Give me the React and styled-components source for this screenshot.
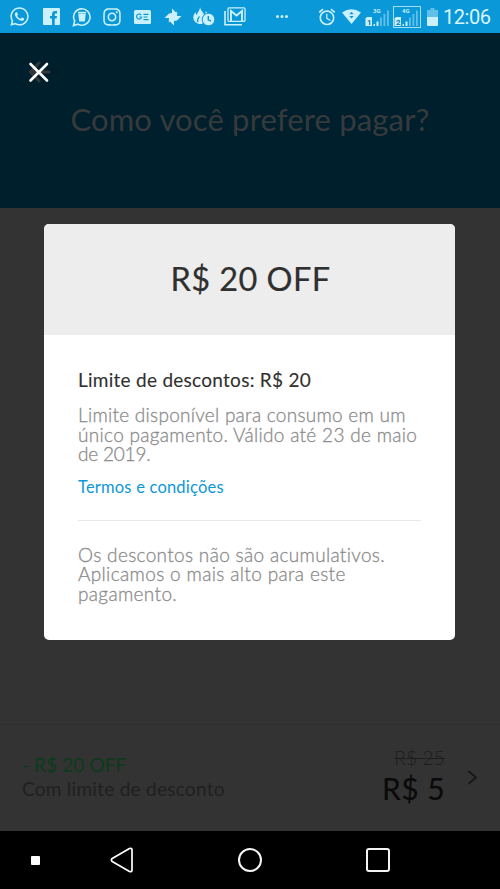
import React from "react";
import styled, { createGlobalStyle } from "styled-components";
import { FaWhatsapp, FaInstagram } from "react-icons/fa";
import { MdAlarm } from "react-icons/md";

const GlobalStyle = createGlobalStyle`
  * { box-sizing: border-box; }
  body { margin: 0; background: #000; font-family: Lato, "Open Sans", sans-serif; }
  h1, h2, h3, p { margin: 0; font-weight: 400; }
`;

const Screen = styled.div`
  position: relative;
  display: grid;
  grid-template-rows: 33px 175px 1fr 107px 58px;
  width: 500px;
  height: 889px;
  overflow: hidden;
  background: #333;
`;

const StatusBar = styled.div`
  display: flex;
  align-items: center;
  background: #0b98d9;
  color: #caf0fb;
  svg { display: block; flex: none; }
`;

const StatusItem = styled.span`
  flex: none;
  margin-left: ${(p) => p.$gap}px;
`;

const Clock = styled.time`
  margin-left: 5px;
  font: 400 20px/33px Roboto, sans-serif;
  letter-spacing: -0.45px;
  color: #d9f5fd;
  padding-top: 2px;
`;

const Header = styled.header`
  position: relative;
  display: flex;
  flex-direction: column;
  align-items: center;
  padding-top: 66px;
  background: #001f2c;
`;

const PageTitle = styled.h1`
  font-size: 31px;
  line-height: 40px;
  letter-spacing: 0.15px;
  white-space: nowrap;
  color: #363a3c;
`;

const CloseButton = styled.button`
  position: absolute;
  left: 27px;
  top: 27px;
  width: 24px;
  height: 24px;
  padding: 0;
  border: 0;
  background: none;
  svg { display: block; }
`;

const Stage = styled.main`
  display: flex;
  justify-content: center;
  align-items: flex-start;
  padding: 16px 1px 0 0;
`;

const Dialog = styled.section`
  width: 411px;
  height: 416px;
  border-radius: 5px;
  overflow: hidden;
  background: #fff;
`;

const DialogHead = styled.div`
  display: flex;
  align-items: center;
  justify-content: center;
  height: 111px;
  padding: 0 0 2px 2px;
  background: #ededed;
`;

const DialogTitle = styled.h2`
  font-size: 32.5px;
  line-height: 40px;
  letter-spacing: 0.4px;
  color: #303030;
  -webkit-text-stroke: 0.2px #303030;
`;

const DialogBody = styled.div`
  display: flex;
  flex-direction: column;
  padding: 33px 34px 0;
`;

const Limit = styled.h3`
  font-size: 19px;
  line-height: 24px;
  letter-spacing: 0.27px;
  white-space: nowrap;
  color: #303030;
  -webkit-text-stroke: 0.1px #303030;
`;

const Copy = styled.p`
  margin-top: ${(p) => p.$top}px;
  font-size: 19px;
  font-weight: 300;
  line-height: 19.5px;
  color: #8c8c8c;
  -webkit-text-stroke: 0.3px #8c8c8c;
`;

const Line = styled.span`
  display: block;
  white-space: nowrap;
  letter-spacing: ${(p) => p.$track}px;
`;

const TermsLink = styled.a`
  margin-top: 13px;
  font-size: 16.5px;
  line-height: 20px;
  letter-spacing: 0.2px;
  color: #0b98d9;
`;

const Divider = styled.hr`
  width: 100%;
  height: 1px;
  margin: 23px 0 0;
  border: 0;
  background: #e9e9e9;
`;

const Footer = styled.footer`
  display: flex;
  justify-content: space-between;
  border-top: 1px solid #2f2f2f;
  padding: 0 22px;
  line-height: 24px;
  font-size: 19px;
`;

const Summary = styled.div`
  padding-top: 28px;
`;

const Discount = styled.p`
  letter-spacing: 0.1px;
  color: #0c3a1c;
`;

const Note = styled.p`
  letter-spacing: 0.27px;
  color: #202020;
`;

const PriceGroup = styled.div`
  display: flex;
  align-items: flex-start;
`;

const Prices = styled.div`
  padding-top: 21px;
  text-align: right;
`;

const OldPrice = styled.p`
  letter-spacing: 0.2px;
  color: #1d1d1d;
  font-weight: 300;
  text-decoration: line-through;
`;

const Price = styled.p`
  font-size: 30px;
  line-height: 36px;
  letter-spacing: 0.4px;
  color: #0a0a0a;
  -webkit-text-stroke: 0.15px #0a0a0a;
`;

const Chevron = styled.svg`
  margin: 44px 0 0 22px;
`;

const NavBar = styled.nav`
  display: flex;
  align-items: center;
  background: #000;
  svg { display: block; }
`;

const Pin = styled.span`
  width: 9px;
  height: 9px;
  margin: 0 70px 0 31px;
  border-radius: 1px;
  background: #fff;
`;

const NavKey = styled.span`
  width: 24px;
  height: 24px;
  margin-left: 104px;
  border: 2px solid #f4f4f4;
  border-radius: ${(p) => p.$radius};
`;

const SimLabel = styled.text`
  font: 700 ${(p) => p.$size}px Roboto, sans-serif;
  fill: ${(p) => p.$color || "#caf0fb"};
`;

const TrashBubble = () => (
  <svg width="20" height="20" viewBox="0 0 20 20" fill="none">
    <path d="M1.500 18.500 2.700 14a8.200 8.200 0 1 1 3.300 3.200z" stroke="currentColor" strokeWidth="1.600" />
    <path d="M6.200 6.500h7.600l-1 8H7.200z" fill="currentColor" />
    <path d="M6 5.500h8" stroke="currentColor" strokeWidth="1.400" />
  </svg>
);

const Facebook = () => (
  <svg width="17" height="17" viewBox="0 0 17 17">
    <rect width="17" height="17" rx="1" fill="currentColor" />
    <path d="M9 17V10.500H7V8h2V6.200C9 4 10.400 3 12.200 3H14v2.400h-1.200c-.8 0-1.100.4-1.100 1.100V8H14l-.4 2.500h-1.900V17z" fill="#0b98d9" />
  </svg>
);

const News = () => (
  <svg width="17" height="14" viewBox="0 0 17 14">
    <rect width="17" height="14" rx="1.500" fill="currentColor" />
    <path d="M7.200 5.100A2.500 2.500 0 1 0 7.600 7H5.300M9.500 4.300h5M9.500 7h4M9.500 9.700h5" fill="none" stroke="#0b98d9" strokeWidth="1.200" />
  </svg>
);

const Pinwheel = () => (
  <svg width="18" height="18" viewBox="0 0 18 18" fill="currentColor">
    <path d="M8 .5 12.500 5v4H9V7L8 9H3.500Q4 5.500 8 5z" />
    <path d="M17.500 8 13 12.500H9V9l4-5.500Q13.500 4 13 8z" />
    <path d="M10 17.500 5.500 13V9H9l5.500 0Q14 12.500 10 13z" />
    <path d="M.5 10 5 5.500h4V9l-4 5.500Q4.500 14 5 10z" />
  </svg>
);

const FlameClock = () => (
  <svg width="22" height="19" viewBox="0 0 22 19">
    <path d="M7 0c.5 4 4 5 4 8.300C13 7 12.500 5 12.500 4c2 1.500 3 3 3 4.500L9 17H6C2.500 16 .3 13.500.3 10.500.3 8 1.500 6.500 2.800 5c0 1.500.2 2.500 1.200 3.200C4 5 7 4 7 0z" fill="currentColor" />
    <path d="M5 15c-1.500-2 .5-4 1.500-5.500" stroke="#0b98d9" fill="none" strokeWidth="1.300" />
    <circle cx="15.500" cy="12.500" r="6.300" fill="currentColor" stroke="#0b98d9" strokeWidth="1" />
    <path d="M15.300 9v3.800l2.700 1.200" fill="none" stroke="#0b98d9" strokeWidth="1.400" />
  </svg>
);

const MailStack = () => (
  <svg width="22" height="19" viewBox="0 0 22 19" fill="none" stroke="currentColor">
    <path d="M1 4v13.800h17" strokeWidth="1.600" />
    <rect x="4" y=".8" width="17" height="13.500" rx="1" strokeWidth="1.300" />
    <path d="M7 14V4l5.500 4.500L18 4v10" strokeWidth="1.900" />
  </svg>
);

const Dots = () => (
  <svg width="12" height="3" viewBox="0 0 12 3" fill="currentColor">
    <circle cx="1.500" cy="1.500" r="1.500" /><circle cx="6" cy="1.500" r="1.500" /><circle cx="10.500" cy="1.500" r="1.500" />
  </svg>
);

const Wifi = () => (
  <svg width="19" height="15" viewBox="0 0 19 15">
    <path d="M0 3.500Q9.500-3 19 3.500L9.500 15z" fill="currentColor" />
    <path d="m9.500 2.800 2.200 2.500H7.300zM9.500 9.500 7.300 7h4.400z" fill="#0b98d9" />
  </svg>
);

const Signal = ({ sim, net, boxed }) => (
  <svg width="28" height="22" viewBox="0 0 28 22" fill="currentColor">
    {boxed && <rect x=".5" y=".5" width="27" height="21" fill="none" stroke="currentColor" strokeWidth="1" opacity=".8" />}
    <SimLabel x="9" y="6.500" $size={6}>{net}</SimLabel>
    <path d="M1.500 12.500 3 11h5v9H1.500z" />
    <SimLabel x="3" y="18.600" $size={8} $color="#0b78b0">{sim}</SimLabel>
    <path d="M9.500 18h1.500v2H9.500zM12.500 15.500h2V20h-2z" />
    <path d="M16 11.500h1.800V20H16zM19.500 8h1.800v12h-1.800zM23 4.500h1.800V20H23z" opacity=".45" />
  </svg>
);

const Battery = () => (
  <svg width="11" height="18" viewBox="0 0 11 18" fill="currentColor">
    <path d="M3.500 0h4v2H11v7H0V2h3.500z" opacity=".45" />
    <path d="M0 9h11v8a1 1 0 0 1-1 1H1a1 1 0 0 1-1-1z" />
  </svg>
);

export default function App() {
  return (
    <>
      <GlobalStyle />
      <Screen>
        <StatusBar>
          <StatusItem $gap={9}><FaWhatsapp size={21} /></StatusItem>
          <StatusItem $gap={13}><Facebook /></StatusItem>
          <StatusItem $gap={12}><TrashBubble /></StatusItem>
          <StatusItem $gap={10}><FaInstagram size={20} /></StatusItem>
          <StatusItem $gap={12}><News /></StatusItem>
          <StatusItem $gap={13}><Pinwheel /></StatusItem>
          <StatusItem $gap={11}><FlameClock /></StatusItem>
          <StatusItem $gap={9}><MailStack /></StatusItem>
          <StatusItem $gap={30}><Dots /></StatusItem>
          <StatusItem $gap={29}><MdAlarm size={20} /></StatusItem>
          <StatusItem $gap={5}><Wifi /></StatusItem>
          <StatusItem $gap={3}><Signal sim="1" net="3G" /></StatusItem>
          <StatusItem $gap={1}><Signal sim="2" net="4G" boxed /></StatusItem>
          <StatusItem $gap={6}><Battery /></StatusItem>
          <Clock>12:06</Clock>
        </StatusBar>

        <Header>
          <CloseButton aria-label="Fechar">
            <svg width="24" height="24" viewBox="0 0 24 24" fill="none" strokeLinecap="round">
              <path d="M4 12h18M12 3l-8.500 9 8.500 9" stroke="#343638" strokeWidth="3" />
              <path d="m3.500 4 16.500 16.500M20 4 3.500 20.500" stroke="#fff" strokeWidth="2.600" />
            </svg>
          </CloseButton>
          <PageTitle>Como você prefere pagar?</PageTitle>
        </Header>

        <Stage>
          <Dialog role="dialog">
            <DialogHead><DialogTitle>R$ 20 OFF</DialogTitle></DialogHead>
            <DialogBody>
              <Limit>Limite de descontos: R$ 20</Limit>
              <Copy $top={13}>
                <Line $track={0.27}>Limite disponível para consumo em um</Line>
                <Line $track={0.31}>único pagamento. Válido até 23 de maio</Line>
                <Line $track={-0.2}>de 2019.</Line>
              </Copy>
              <TermsLink>Termos e condições</TermsLink>
              <Divider />
              <Copy $top={24}>
                <Line $track={0.33}>Os descontos não são acumulativos.</Line>
                <Line $track={0.35}>Aplicamos o mais alto para este</Line>
                <Line $track={0.35}>pagamento.</Line>
              </Copy>
            </DialogBody>
          </Dialog>
        </Stage>

        <Footer>
          <Summary>
            <Discount>- R$ 20 OFF</Discount>
            <Note>Com limite de desconto</Note>
          </Summary>
          <PriceGroup>
            <Prices>
              <OldPrice>R$ 25</OldPrice>
              <Price>R$ 5</Price>
            </Prices>
            <Chevron width="11" height="17" viewBox="0 0 11 17" fill="none" stroke="#181818" strokeWidth="2">
              <path d="m1.500 2 7.500 6.500L1.500 15" />
            </Chevron>
          </PriceGroup>
        </Footer>

        <NavBar>
          <Pin />
          <svg width="24" height="26" viewBox="0 0 24 26" fill="none" stroke="#fff" strokeWidth="1.700" strokeLinejoin="round">
            <path d="M2.200 11.500 19.500 1.500Q22 .7 22 3v20q0 2.300-2.500 1.500L2.200 14.500Q.5 13 2.200 11.500z" />
          </svg>
          <NavKey $radius="50%" />
          <NavKey $radius="3px" />
        </NavBar>
      </Screen>
    </>
  );
}
